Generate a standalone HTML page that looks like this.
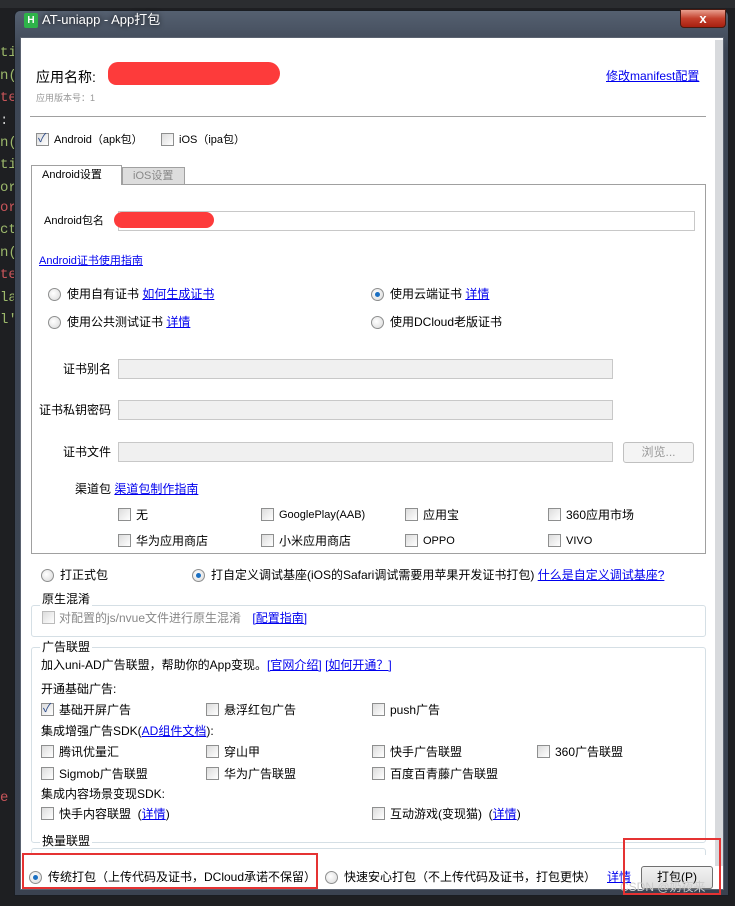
<!DOCTYPE html>
<html><head><meta charset="utf-8"><style>
*{margin:0;padding:0;box-sizing:border-box}
body{width:735px;height:906px;background:#1e1f22;position:relative;overflow:hidden;font-family:"Liberation Sans","Noto Sans CJK SC",sans-serif;font-size:12px;color:#000}
.a{position:absolute;white-space:nowrap;line-height:14px}
.t{position:absolute;white-space:nowrap;line-height:14px;font-size:12px}
.lk{color:#0000ee;text-decoration:underline}
.cb{position:absolute;width:13px;height:13px;border:1px solid #8e8f8f;background:linear-gradient(135deg,#dcdcdc,#fff)}
.rd{position:absolute;width:13px;height:13px;border-radius:50%;border:1px solid #8e8f8f;background:radial-gradient(circle at 40% 40%,#fff,#d8d8d8)}
.rd.on::after{content:"";position:absolute;left:3px;top:3px;width:5px;height:5px;border-radius:50%;background:#1a6fc2}
.in{position:absolute;height:20px;border:1px solid #c8c8c8;background:#f0f0f0}
.grp{position:absolute;border:1px solid #d5dfe5;border-radius:3px}
.code{position:absolute;left:0;font-family:"Liberation Mono",monospace;font-size:14px}
</style></head><body>
<div style="position:absolute;left:0;top:0;width:735px;height:8px;background:#2b2d30"></div>
<div class="code" style="top:45px;color:#9cb86b">ti</div>
<div class="code" style="top:68px;color:#9cb86b">n(</div>
<div class="code" style="top:90px;color:#c9555a">te</div>
<div class="code" style="top:113px;color:#ccc">:</div>
<div class="code" style="top:135px;color:#9cb86b">n(</div>
<div class="code" style="top:157px;color:#9cb86b">ti</div>
<div class="code" style="top:180px;color:#9cb86b">or</div>
<div class="code" style="top:200px;color:#c9555a">or</div>
<div class="code" style="top:222px;color:#9cb86b">ct</div>
<div class="code" style="top:245px;color:#9cb86b">n(</div>
<div class="code" style="top:267px;color:#c9555a">te</div>
<div class="code" style="top:290px;color:#9cb86b">la</div>
<div class="code" style="top:312px;color:#9cb86b">l'</div>
<div class="code" style="top:790px;color:#c9555a">e</div>
<!-- window frame -->
<div style="position:absolute;left:14px;top:10px;width:715px;height:886px;background:linear-gradient(#556070,#3d4655 40px,#3a4250);border:1px solid #1a1d22;border-radius:6px 6px 0 0"></div>
<div style="position:absolute;left:24px;top:13px;width:14px;height:15px;background:#2fb34a;border-radius:2px;color:#fff;font-size:10px;font-weight:bold;text-align:center;line-height:15px">H</div>
<div class="a" style="left:42px;top:13px;color:#fff;font-size:13px;text-shadow:0 0 6px #000">AT-uniapp - App打包</div>
<div style="position:absolute;left:680px;top:9px;width:46px;height:19px;background:linear-gradient(#e8a090,#c4402c 50%,#a82010);border:1px solid #4a1a10;border-radius:0 0 4px 4px;color:#fff;font-weight:bold;text-align:center;line-height:17px;font-size:13px">x</div>
<div style="position:absolute;left:20px;top:37px;width:704px;height:853px;background:#fff;border:1px solid #5a6270"></div>
<div style="position:absolute;left:715px;top:40px;width:8px;height:826px;background:#d8dadd"></div>

<div class="a" style="left:36px;top:70px;font-size:14px">应用名称:</div>
<div style="position:absolute;left:108px;top:62px;width:172px;height:23px;background:#fd3b3b;border-radius:12px 14px 14px 10px"></div>
<div class="a" style="left:36px;top:91px;font-size:9px;color:#999">应用版本号：1</div>
<div class="a lk" style="left:606px;top:69px">修改manifest配置</div>
<div style="position:absolute;left:30px;top:116px;width:676px;height:1px;background:#a0a0a0"></div>

<div class="cb" style="left:36px;top:133px"></div><div class="a" style="left:38px;top:131px;color:#2a4a8a;font-size:12px">✓</div>
<div class="t" style="left:54px;top:133px;font-size:11px">Android（apk包）</div>
<div class="cb" style="left:161px;top:133px"></div>
<div class="t" style="left:179px;top:133px;font-size:11px">iOS（ipa包）</div>

<div style="position:absolute;left:31px;top:184px;width:675px;height:370px;border:1px solid #a0a0a0"></div>
<div style="position:absolute;left:31px;top:165px;width:91px;height:20px;border:1px solid #a0a0a0;border-bottom:none;background:#fff"></div>
<div class="t" style="left:42px;top:168px;font-size:11px">Android设置</div>
<div style="position:absolute;left:122px;top:167px;width:63px;height:18px;border:1px solid #a0a0a0;background:#ddd"></div>
<div class="t" style="left:133px;top:169px;font-size:11px;color:#888">iOS设置</div>

<div class="t" style="left:44px;top:214px;font-size:11px">Android包名</div>
<div class="in" style="left:118px;top:211px;width:577px;background:#fff"></div>
<div style="position:absolute;left:114px;top:212px;width:100px;height:16px;background:#fd3b3b;border-radius:8px"></div>
<div class="t lk" style="left:39px;top:254px;font-size:11px">Android证书使用指南</div>

<div class="rd" style="left:48px;top:288px"></div><div class="t" style="left:67px;top:287px">使用自有证书 <span class="lk">如何生成证书</span></div>
<div class="rd on" style="left:371px;top:288px"></div><div class="t" style="left:390px;top:287px">使用云端证书 <span class="lk">详情</span></div>
<div class="rd" style="left:48px;top:316px"></div><div class="t" style="left:67px;top:315px">使用公共测试证书 <span class="lk">详情</span></div>
<div class="rd" style="left:371px;top:316px"></div><div class="t" style="left:390px;top:315px">使用DCloud老版证书</div>

<div class="t" style="left:63px;top:362px">证书别名</div><div class="in" style="left:118px;top:359px;width:495px"></div>
<div class="t" style="left:39px;top:403px">证书私钥密码</div><div class="in" style="left:118px;top:400px;width:495px"></div>
<div class="t" style="left:63px;top:445px">证书文件</div><div class="in" style="left:118px;top:442px;width:495px"></div>
<div style="position:absolute;left:623px;top:442px;width:71px;height:21px;border:1px solid #c0c0c0;border-radius:3px;background:#f4f4f4;color:#999;text-align:center;line-height:19px">浏览...</div>

<div class="t" style="left:75px;top:482px">渠道包 <span class="lk">渠道包制作指南</span></div>
<div class="cb" style="left:118px;top:508px"></div><div class="t" style="left:136px;top:508px">无</div>
<div class="cb" style="left:261px;top:508px"></div><div class="t" style="left:279px;top:508px;font-size:11px">GooglePlay(AAB)</div>
<div class="cb" style="left:405px;top:508px"></div><div class="t" style="left:423px;top:508px">应用宝</div>
<div class="cb" style="left:548px;top:508px"></div><div class="t" style="left:566px;top:508px">360应用市场</div>
<div class="cb" style="left:118px;top:534px"></div><div class="t" style="left:136px;top:534px">华为应用商店</div>
<div class="cb" style="left:261px;top:534px"></div><div class="t" style="left:279px;top:534px">小米应用商店</div>
<div class="cb" style="left:405px;top:534px"></div><div class="t" style="left:423px;top:534px;font-size:11px">OPPO</div>
<div class="cb" style="left:548px;top:534px"></div><div class="t" style="left:566px;top:534px;font-size:11px">VIVO</div>

<div class="rd" style="left:41px;top:569px"></div><div class="t" style="left:60px;top:568px">打正式包</div>
<div class="rd on" style="left:192px;top:569px"></div><div class="t" style="left:211px;top:568px">打自定义调试基座(iOS的Safari调试需要用苹果开发证书打包) <span class="lk">什么是自定义调试基座?</span></div>

<div class="grp" style="left:31px;top:605px;width:675px;height:32px"></div>
<div class="t" style="left:40px;top:592px;background:#fff;padding:0 2px">原生混淆</div>
<div class="cb" style="left:42px;top:611px;border-color:#bbb"></div><div class="t" style="left:59px;top:611px;color:#888">对配置的js/nvue文件进行原生混淆 <span class="lk" style="margin-left:8px">[配置指南]</span></div>

<div class="grp" style="left:31px;top:647px;width:675px;height:196px"></div>
<div class="t" style="left:40px;top:640px;background:#fff;padding:0 2px">广告联盟</div>
<div class="t" style="left:41px;top:658px">加入uni-AD广告联盟，帮助你的App变现。<span class="lk">[官网介绍]</span> <span class="lk">[如何开通？]</span></div>
<div class="t" style="left:41px;top:682px">开通基础广告:</div>
<div class="cb" style="left:41px;top:703px"></div><div class="a" style="left:43px;top:701px;color:#2a4a8a">✓</div><div class="t" style="left:59px;top:703px">基础开屏广告</div>
<div class="cb" style="left:206px;top:703px"></div><div class="t" style="left:224px;top:703px">悬浮红包广告</div>
<div class="cb" style="left:372px;top:703px"></div><div class="t" style="left:390px;top:703px">push广告</div>
<div class="t" style="left:41px;top:724px">集成增强广告SDK(<span class="lk">AD组件文档</span>):</div>
<div class="cb" style="left:41px;top:745px"></div><div class="t" style="left:59px;top:745px">腾讯优量汇</div>
<div class="cb" style="left:206px;top:745px"></div><div class="t" style="left:224px;top:745px">穿山甲</div>
<div class="cb" style="left:372px;top:745px"></div><div class="t" style="left:390px;top:745px">快手广告联盟</div>
<div class="cb" style="left:537px;top:745px"></div><div class="t" style="left:555px;top:745px">360广告联盟</div>
<div class="cb" style="left:41px;top:767px"></div><div class="t" style="left:59px;top:767px">Sigmob广告联盟</div>
<div class="cb" style="left:206px;top:767px"></div><div class="t" style="left:224px;top:767px">华为广告联盟</div>
<div class="cb" style="left:372px;top:767px"></div><div class="t" style="left:390px;top:767px">百度百青藤广告联盟</div>
<div class="t" style="left:41px;top:787px">集成内容场景变现SDK:</div>
<div class="cb" style="left:41px;top:807px"></div><div class="t" style="left:59px;top:807px">快手内容联盟 &nbsp;(<span class="lk">详情</span>)</div>
<div class="cb" style="left:372px;top:807px"></div><div class="t" style="left:390px;top:807px">互动游戏(变现猫) &nbsp;(<span class="lk">详情</span>)</div>

<div class="grp" style="left:31px;top:848px;width:675px;height:10px"></div>
<div class="t" style="left:40px;top:834px;background:#fff;padding:0 2px">换量联盟</div>
<div style="position:absolute;left:21px;top:855px;width:694px;height:34px;background:#fff"></div>

<div class="rd on" style="left:29px;top:871px"></div><div class="t" style="left:48px;top:870px">传统打包（上传代码及证书，DCloud承诺不保留）</div>
<div class="rd" style="left:325px;top:871px"></div><div class="t" style="left:344px;top:870px">快速安心打包（不上传代码及证书，打包更快）</div>
<div class="t lk" style="left:607px;top:870px">详情</div>
<div style="position:absolute;left:641px;top:866px;width:72px;height:23px;border:1px solid #707070;border-radius:3px;background:linear-gradient(#f2f2f2,#dcdcdc);text-align:center;line-height:21px">打包(P)</div>
<div class="t" style="left:620px;top:880px;color:#ccc;font-size:12px">CSDN @奶夜来</div>

<div style="position:absolute;left:22px;top:853px;width:296px;height:36px;border:2px solid #e53333"></div>
<div style="position:absolute;left:623px;top:838px;width:98px;height:57px;border:2px solid #e53333"></div>
</body></html>
